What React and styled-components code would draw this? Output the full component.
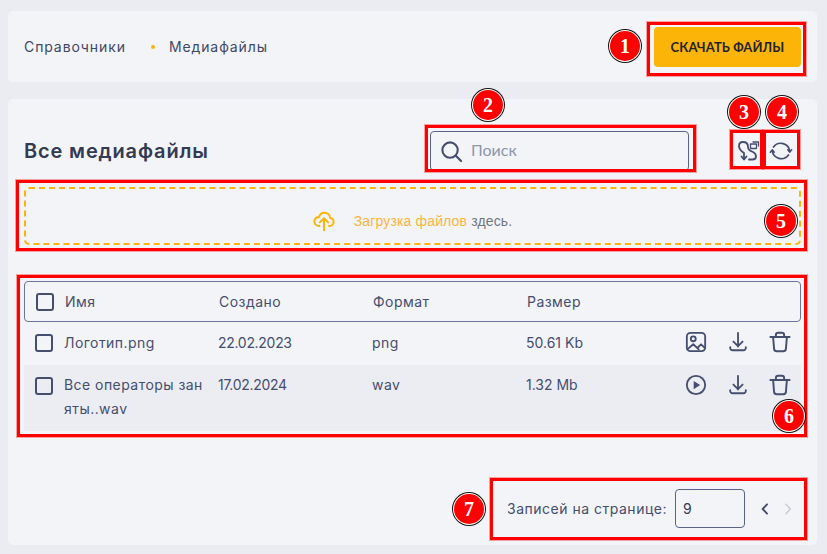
import React from "react";
import styled, { createGlobalStyle } from "styled-components";

const GlobalStyle = createGlobalStyle`
  html, body {
    margin: 0;
    padding: 0;
    background: #ebecf1;
    font-family: "Inter", "Liberation Sans", sans-serif;
    color: #454e6e;
  }
`;

const Page = styled.div`
  position: relative;
  width: 827px;
  height: 554px;
  box-sizing: border-box;
  padding: 11px 10px 9px 8px;
  display: flex;
  flex-direction: column;
  gap: 17px;
  overflow: hidden;
`;

const Card = styled.section`
  background: #f3f4f8;
  border-radius: 5px;
`;

const TopBar = styled(Card)`
  height: 71px;
  flex: none;
  display: flex;
  align-items: center;
  justify-content: space-between;
  padding: 0 16px;
`;

const Crumbs = styled.nav`
  display: flex;
  align-items: center;
  font-size: 14px;
  letter-spacing: 0.9px;
  color: #3f4865;
`;

const Dot = styled.span`
  width: 4px;
  height: 4px;
  margin: 0 14px 0 25px;
  border-radius: 50%;
  background: #fdb408;
`;

const DownloadButton = styled.button`
  width: 147px;
  height: 40px;
  border: 0;
  border-radius: 4px;
  background: #fdb408;
  color: #23242b;
  font-family: "Lato", sans-serif;
  font-size: 13px;
  font-weight: 700;
  letter-spacing: 0.1px;
`;

const MainCard = styled(Card)`
  flex: 1;
  display: flex;
  flex-direction: column;
  padding: 32px 16px 17px;
`;

const Toolbar = styled.div`
  display: flex;
  align-items: center;
  height: 40px;
`;

const Title = styled.h1`
  margin: 0;
  width: 406px;
  font-size: 20px;
  line-height: 40px;
  font-weight: 600;
  letter-spacing: 0.85px;
  color: #343a52;
`;

const SearchBox = styled.label`
  width: 259px;
  height: 40px;
  box-sizing: border-box;
  display: flex;
  align-items: center;
  gap: 8px;
  padding-left: 9px;
  border: 1px solid #5a6488;
  border-radius: 4px;
  color: #8d97a8;
  font-family: "Lato", sans-serif;
  font-size: 16px;
`;

const Placeholder = styled.span`
  margin-bottom: 3px;
`;

const ToolIcons = styled.div`
  display: flex;
  align-items: center;
  margin-left: 47px;
  gap: 9px;
`;

const DropZone = styled.div`
  height: 58px;
  margin-top: 16px;
  box-sizing: border-box;
  display: flex;
  align-items: center;
  justify-content: center;
  gap: 19px;
  padding-top: 10px;
  border: 2px dashed #fdb408;
  border-radius: 5px;
  font-family: "Liberation Sans", sans-serif;
  font-size: 14px;
  letter-spacing: 0.15px;
  color: #70757f;
`;

const Accent = styled.span`
  color: #fdb53a;
`;

const Table = styled.div`
  margin-top: 36px;
  font-size: 14px;
  letter-spacing: 0.45px;
`;

const Grid = styled.div`
  display: grid;
  grid-template-columns: 154px 154px 154px 1fr auto;
  align-items: start;
`;

const HeadRow = styled(Grid)`
  height: 41px;
  box-sizing: border-box;
  align-items: center;
  padding-left: 40px;
  border: 1px solid #6b7499;
  border-radius: 4px;
  position: relative;
`;

const BodyRow = styled(Grid)`
  min-height: ${(p) => (p.$tall ? "66px" : "43px")};
  box-sizing: border-box;
  padding: ${(p) => (p.$tall ? "8px" : "9px")} 0 0 40px;
  background: ${(p) => (p.$tall ? "#ecedf2" : "transparent")};
  position: relative;
  line-height: 24px;
  color: #454e6e;
`;

const Numeric = styled.span`
  letter-spacing: ${(p) => (p.$tight ? "-0.3px" : "0")};
`;

const Check = styled.span`
  position: absolute;
  left: 11px;
  top: ${(p) => (p.$head ? "11px" : "12px")};
  width: 18px;
  height: 18px;
  box-sizing: border-box;
  border: 2px solid #454e6e;
  border-radius: 3px;
`;

const Actions = styled.div`
  display: flex;
  gap: 20px;
  margin-top: ${(p) => (p.$tall ? "1px" : "0")};
  padding-right: 10px;
`;

const Footer = styled.div`
  margin-top: auto;
  display: flex;
  align-items: center;
  justify-content: flex-end;
  padding-right: 6px;
  font-size: 14px;
  letter-spacing: 0.5px;
  color: #454e6e;
`;

const PageSize = styled.div`
  width: 70px;
  height: 39px;
  box-sizing: border-box;
  margin: 0 13px 0 8px;
  padding-left: 7px;
  display: flex;
  align-items: center;
  border: 1px solid #5a6488;
  border-radius: 4px;
  color: #343a52;
`;

const Pager = styled.div`
  display: flex;
  align-items: center;
  gap: 9px;
`;

const Frame = styled.div`
  position: absolute;
  left: ${(p) => p.$x}px;
  top: ${(p) => p.$y}px;
  width: ${(p) => p.$w}px;
  height: ${(p) => p.$h}px;
  box-sizing: border-box;
  border: 3px solid #ff0000;
  box-shadow: 0 0 0 1px rgba(255, 0, 0, 0.35);
  pointer-events: none;
`;

const Marker = styled.div`
  position: absolute;
  left: ${(p) => p.$x - 15}px;
  top: ${(p) => p.$y - 15}px;
  width: 30px;
  height: 30px;
  display: flex;
  align-items: center;
  justify-content: center;
  border-radius: 50%;
  background: #ff0000;
  box-shadow: 0 0 0 1px #fff, 0 0 0 2px #111;
  color: #fff;
  font-family: "Liberation Serif", serif;
  font-size: 20px;
  font-weight: 700;
`;

const Icon = ({ size = 24, color = "#454e6e", sw = 2, children }) => (
  <svg
    width={size}
    height={size}
    viewBox="0 0 24 24"
    fill="none"
    stroke={color}
    strokeWidth={sw}
    strokeLinecap="round"
    strokeLinejoin="round"
  >
    {children}
  </svg>
);

const SearchIcon = () => (
  <Icon size={23} sw={2.2}>
    <circle cx="10.5" cy="10.5" r="8" />
    <path d="M16.5 16.5 22 22" />
  </Icon>
);

const RouteIcon = () => (
  <Icon size={24} sw={1.8}>
    <path d="M8 20V14C5 12 3 10 3 7 3 4 5 3 7 3 10 3 12 5 12 8 12 11 14 12 17 13 19 14 20 16 20 17.5 20 19.5 18.5 20.5 16.5 20.5H13" />
    <path d="M5.5 17.5 8 20.5 10.5 17.5" />
    <rect x="14.5" y="5" width="6" height="4.5" strokeWidth="1.3" />
    <path d="M17 3H22.5V7" strokeWidth="1.3" />
  </Icon>
);

const RefreshIcon = () => (
  <Icon size={24} sw={1.7}>
    <path d="M4.5 8A9 9 0 0 1 20.7 12.5" />
    <path d="M19.5 16A9 9 0 0 1 3.3 11.5" />
    <path d="M18.8 10.8 20.7 13 22.6 10.8" />
    <path d="M1.4 13.2 3.3 11 5.2 13.2" />
  </Icon>
);

const UploadIcon = () => (
  <Icon size={22} color="#fdb408" sw={2.2}>
    <path d="M7 17.5C3.5 17.5 1.5 15 1.5 12.5 1.5 9.5 4 7.5 6.5 7.8 7.5 4.5 10 3 12.5 3 16 3 18.5 5.5 18.5 8.5 21 9 22.5 11 22.5 13 22.5 15.5 20.5 17.5 17.5 17.5" />
    <path d="M12 22V9.5M7.5 13.5 12 9l4.5 4.5" />
  </Icon>
);

const ImageIcon = () => (
  <Icon size={22}>
    <rect x="2" y="2" width="20" height="20" rx="4" />
    <circle cx="9" cy="8.5" r="2.7" />
    <path d="M2.5 20 9 14.5 15 20M14 18l3.5-3.5 4 4" />
  </Icon>
);

const PlayIcon = () => (
  <Icon size={22}>
    <circle cx="12" cy="12" r="10" />
    <path d="M9.5 7.5 16.5 12l-7 4.5z" fill="#454e6e" stroke="none" />
  </Icon>
);

const DownloadIcon = () => (
  <Icon size={22}>
    <path d="M12 2v15M7 11.5 12 16.5l5-5" />
    <path d="M3.5 17.5v1A2.5 2.5 0 0 0 6 21h12a2.5 2.5 0 0 0 2.5-2.5v-1" />
  </Icon>
);

const TrashIcon = () => (
  <Icon size={22} sw={2.1}>
    <path d="M1.5 6.5h21" />
    <path d="M7.5 6V4.5A2.5 2.5 0 0 1 10 2h4a2.5 2.5 0 0 1 2.5 2.5V6" />
    <path d="M4.5 7 5.5 19A3 3 0 0 0 8.5 22h7a3 3 0 0 0 3-3l1-12" />
  </Icon>
);

const Chevron = ({ right, color, sw }) => (
  <Icon size={14} color={color} sw={sw}>
    <path d={right ? "M8.5 4 16 12l-7.5 8" : "M15.5 4 8 12l7.5 8"} />
  </Icon>
);

const frames = [
  { x: 647, y: 22, w: 159, h: 54 },
  { x: 425, y: 125, w: 271, h: 47 },
  { x: 730, y: 130, w: 33, h: 39 },
  { x: 763, y: 130, w: 37, h: 39 },
  { x: 16, y: 180, w: 791, h: 71 },
  { x: 17, y: 275, w: 790, h: 162 },
  { x: 490, y: 478, w: 317, h: 62 },
];

const markers = [
  { n: 1, x: 625, y: 46 },
  { n: 2, x: 488, y: 105 },
  { n: 3, x: 744, y: 112 },
  { n: 4, x: 782, y: 112 },
  { n: 5, x: 781, y: 221 },
  { n: 6, x: 789, y: 416 },
  { n: 7, x: 469, y: 509 },
];

export default function App() {
  return (
    <>
      <GlobalStyle />
      <Page>
        <TopBar>
          <Crumbs>
            Справочники
            <Dot />
            Медиафайлы
          </Crumbs>
          <DownloadButton>СКАЧАТЬ ФАЙЛЫ</DownloadButton>
        </TopBar>

        <MainCard>
          <Toolbar>
            <Title>Все медиафайлы</Title>
            <SearchBox>
              <SearchIcon />
              <Placeholder>Поиск</Placeholder>
            </SearchBox>
            <ToolIcons>
              <RouteIcon />
              <RefreshIcon />
            </ToolIcons>
          </Toolbar>

          <DropZone>
            <UploadIcon />
            <span>
              <Accent>Загрузка файлов</Accent> здесь.
            </span>
          </DropZone>

          <Table>
            <HeadRow>
              <Check $head />
              <span>Имя</span>
              <span>Создано</span>
              <span>Формат</span>
              <span>Размер</span>
            </HeadRow>
            <BodyRow>
              <Check />
              <span>Логотип.png</span>
              <Numeric $tight>22.02.2023</Numeric>
              <span>png</span>
              <Numeric>50.61 Kb</Numeric>
              <Actions>
                <ImageIcon />
                <DownloadIcon />
                <TrashIcon />
              </Actions>
            </BodyRow>
            <BodyRow $tall>
              <Check />
              <span>
                Все операторы зан
                <br />
                яты..wav
              </span>
              <Numeric $tight>17.02.2024</Numeric>
              <span>wav</span>
              <Numeric>1.32 Mb</Numeric>
              <Actions $tall>
                <PlayIcon />
                <DownloadIcon />
                <TrashIcon />
              </Actions>
            </BodyRow>
          </Table>

          <Footer>
            Записей на странице:
            <PageSize>9</PageSize>
            <Pager>
              <Chevron color="#454e6e" sw={3.2} />
              <Chevron right color="#c9ccd6" sw={2.6} />
            </Pager>
          </Footer>
        </MainCard>

        {frames.map((f) => (
          <Frame key={`${f.x}-${f.y}`} $x={f.x} $y={f.y} $w={f.w} $h={f.h} />
        ))}
        {markers.map((m) => (
          <Marker key={m.n} $x={m.x} $y={m.y}>
            {m.n}
          </Marker>
        ))}
      </Page>
    </>
  );
}
